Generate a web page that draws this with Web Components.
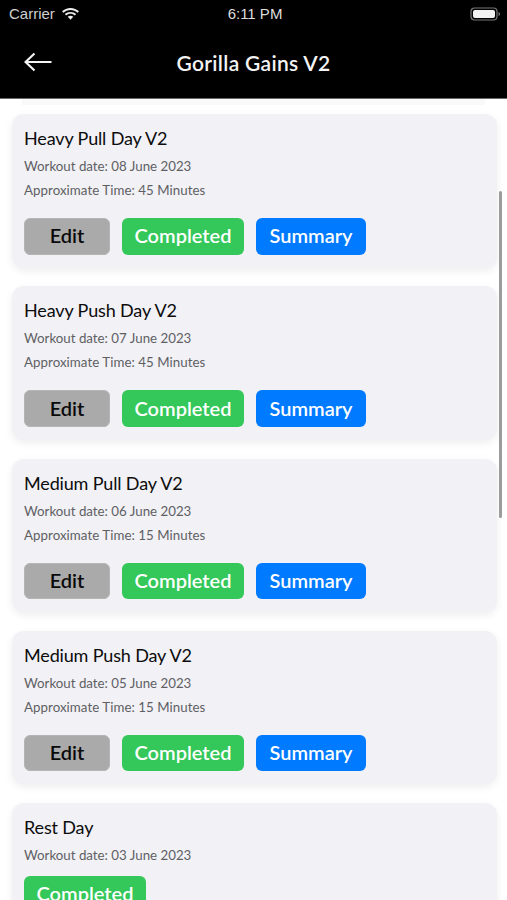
<!DOCTYPE html>
<html>
<head>
<meta charset="utf-8">
<style>
  html, body { margin: 0; height: 100%; background: #fff; }
  body { width: 507px; height: 900px; overflow: hidden; font-family: Lato, "Open Sans", sans-serif; }
</style>
</head>
<body>
<app-screen>
  <status-bar></status-bar>
  <nav-header title="Gorilla Gains V2"></nav-header>
  <workout-list>
    <workout-card name="Heavy Pull Day V2" date="08 June 2023" time="45 Minutes"></workout-card>
    <workout-card name="Heavy Push Day V2" date="07 June 2023" time="45 Minutes"></workout-card>
    <workout-card name="Medium Pull Day V2" date="06 June 2023" time="15 Minutes"></workout-card>
    <workout-card name="Medium Push Day V2" date="05 June 2023" time="15 Minutes"></workout-card>
    <workout-card name="Rest Day" date="03 June 2023" rest></workout-card>
  </workout-list>
</app-screen>
<script>
class AppScreen extends HTMLElement {
    constructor() {
        super();
        this.attachShadow({ mode: 'open' });
        this.shadowRoot.innerHTML = `
            <style>
                :host { display: flex; flex-direction: column; width: 507px; height: 900px; overflow: hidden; }
            </style>
            <slot></slot>
        `;
    }
}

class StatusBar extends HTMLElement {
    constructor() {
        super();
        this.attachShadow({ mode: 'open' });
        this.shadowRoot.innerHTML = `
            <style>
                :host { display: grid; grid-template-columns: 1fr auto 1fr; align-items: center; flex: none; height: 28px;
                    padding: 0 6px 1px 9px; box-sizing: border-box; background: #000; color: #cfcfcf;
                    font: 15px "Liberation Sans", Arial, sans-serif; }
                .left { display: flex; align-items: center; gap: 6px; }
                .time { color: #dedede; }
                .right { display: flex; justify-content: flex-end; }
                svg { display: block; }
            </style>
            <div class="left">
                <span>Carrier</span>
                <svg width="19" height="14" viewBox="0 0 18 13"><path fill="#eee" d="M9 2.600c2.600 0 5 1 6.800 2.700l1.200-1.300C14.900 2 12.100.8 9 .8S3.100 2 1 4l1.200 1.300C4 3.600 6.400 2.600 9 2.600z"/><path fill="#eee" d="M9 6.300c1.600 0 3 .6 4.100 1.600l1.300-1.300C13 5.200 11.100 4.500 9 4.500s-4 .7-5.400 2.100l1.300 1.300C6 6.900 7.400 6.300 9 6.300z"/><path fill="#eee" d="M9 8.200c-1 0-1.900.4-2.600 1L9 12l2.600-2.800C10.900 8.600 10 8.200 9 8.200z"/></svg>
            </div>
            <span class="time">6:11 PM</span>
            <div class="right">
                <svg width="31" height="14" viewBox="0 0 31 14"><rect x="1" y="1" width="26" height="12" rx="3.500" fill="none" stroke="#777" stroke-width="1.200"/><rect x="3" y="3" width="22" height="8" rx="2" fill="#f2f2f2"/><path d="M28.500 5v4c.8-.3 1.500-1 1.500-2s-.7-1.700-1.500-2z" fill="#777"/></svg>
            </div>
        `;
    }
}

class NavHeader extends HTMLElement {
    constructor() {
        super();
        this.attachShadow({ mode: 'open' });
        this.shadowRoot.innerHTML = `
            <style>
                :host { display: grid; grid-template-columns: 1fr auto 1fr; align-items: center; flex: none; height: 71px;
                    padding: 0 24px 2px; box-sizing: border-box; background: #000; color: #f4f4f4;
                    border-bottom: 1px solid #6a6a6a; }
                svg { display: block; }
                .title { font: 600 21px Lato, sans-serif; letter-spacing: .3px; }
            </style>
            <svg width="28" height="20" viewBox="0 0 28 20"><path d="M27.500 10H1.500M10.500 1.500L1.500 10l9 8.500" fill="none" stroke="#f4f4f4" stroke-width="2.200"/></svg>
            <span class="title"></span>
        `;
    }
    connectedCallback() {
        this.shadowRoot.querySelector('.title').textContent = this.getAttribute('title');
    }
}

class WorkoutList extends HTMLElement {
    constructor() {
        super();
        this.attachShadow({ mode: 'open' });
        this.shadowRoot.innerHTML = `
            <style>
                :host { display: flex; flex-direction: column; gap: 18.750px; position: relative; flex: 1; min-height: 0;
                    padding: 15px 10px 0 12px; overflow: hidden; }
                .prev { position: absolute; left: 22px; right: 22px; top: 0; height: 6px; background: #f9f9f9; }
                .bar { position: absolute; left: 499px; top: 92px; width: 3px; height: 327px; border-radius: 2px; background: #9c9c9c; }
            </style>
            <div class="prev"></div>
            <slot></slot>
            <div class="bar"></div>
        `;
    }
}

class WorkoutCard extends HTMLElement {
    constructor() {
        super();
        this.attachShadow({ mode: 'open' });
        this.shadowRoot.innerHTML = `
            <style>
                :host { display: block; flex: none; background: #f1f1f6; border-radius: 12px; padding: 12px 12px 13px;
                    box-shadow: 0 3px 8px rgba(0,0,0,.07); }
                h2 { margin: 0; font: 400 18px/24px Lato, sans-serif; letter-spacing: -.15px; color: #0c0c0c; }
                p { margin: 0; font: 400 13.300px/24.500px Lato, sans-serif; color: #5f5f63; }
                p.time { letter-spacing: .05px; margin-top: -.5px; }
                h2 + p { margin-top: 4px; }
                .btns { display: flex; gap: 12px; margin-top: 15.500px; }
            </style>
            <h2></h2>
            <p class="date"></p>
            <p class="time"></p>
            <div class="btns"></div>
        `;
    }
    connectedCallback() {
        const root = this.shadowRoot;
        root.querySelector('h2').textContent = this.getAttribute('name');
        root.querySelector('.date').textContent = 'Workout date: ' + this.getAttribute('date');
        const btns = root.querySelector('.btns');
        if (this.hasAttribute('rest')) {
            root.querySelector('.time').remove();
            btns.style.marginTop = '8.5px';
            btns.innerHTML = '<action-button kind="done" w="122">Completed</action-button>';
        } else {
            root.querySelector('.time').textContent = 'Approximate Time: ' + this.getAttribute('time');
            btns.innerHTML = '<action-button kind="edit" w="86">Edit</action-button>'
                + '<action-button kind="done" w="122">Completed</action-button>'
                + '<action-button kind="info" w="110">Summary</action-button>';
        }
    }
}

class ActionButton extends HTMLElement {
    constructor() {
        super();
        this.attachShadow({ mode: 'open' });
        this.shadowRoot.innerHTML = `
            <style>
                :host { display: flex; align-items: center; justify-content: center; height: 36.500px; border-radius: 6px;
                    padding-bottom: 2px; font: 600 20px Lato, sans-serif; color: #fff; box-sizing: border-box; }
                :host([kind="edit"]) { background: #aaaaaa; color: #0a0a0a; border: 1px solid #b4b4b4; }
                :host([kind="done"]) { background: #34c759; }
                :host([kind="info"]) { background: #007aff; }
            </style>
            <slot></slot>
        `;
    }
    connectedCallback() {
        this.style.width = this.getAttribute('w') + 'px';
    }
}

customElements.define('app-screen', AppScreen);
customElements.define('status-bar', StatusBar);
customElements.define('nav-header', NavHeader);
customElements.define('workout-list', WorkoutList);
customElements.define('workout-card', WorkoutCard);
customElements.define('action-button', ActionButton);
</script>
</body>
</html>
